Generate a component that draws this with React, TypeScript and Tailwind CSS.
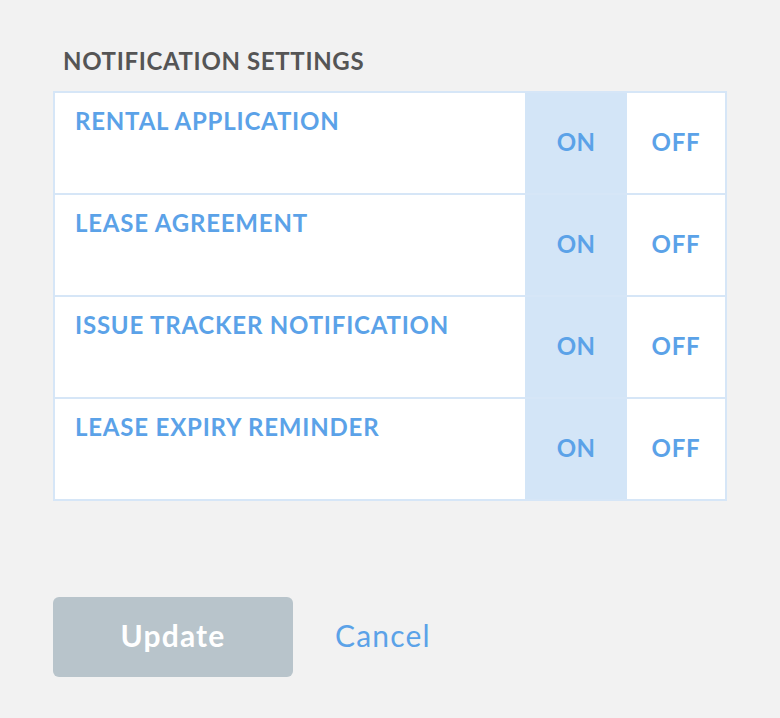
import { useState } from 'react';

const rows = ['RENTAL APPLICATION', 'LEASE AGREEMENT', 'ISSUE TRACKER NOTIFICATION', 'LEASE EXPIRY REMINDER'];

function SettingRow({ label, last }: { label: string; last: boolean }) {
    const [on, setOn] = useState(true);
    return (
        <div className={`flex ${last ? 'h-[100px]' : 'h-[102px] border-b-2 border-[#d6e6f7]'}`}>
            <div className="flex-1 pl-[20px] pt-[16px] text-[24px] tracking-[0.8px] font-bold text-[#5ba2e8] leading-none">{label}</div>
            <button
                onClick={() => setOn(true)}
                className={`w-[102px] pb-[2px] flex items-center justify-center text-[24px] tracking-[0.4px] font-bold text-[#5ba2e8] ${on ? 'bg-[#d3e5f7]' : 'bg-white'}`}
            >
                ON
            </button>
            <button
                onClick={() => setOn(false)}
                className={`w-[98px] pb-[2px] flex items-center justify-center text-[24px] tracking-[0.8px] font-bold text-[#5ba2e8] ${on ? 'bg-white' : 'bg-[#d3e5f7]'}`}
            >
                OFF
            </button>
        </div>
    );
}

function App() {
    return (
        <div className="min-h-[718px] w-[780px] bg-[#f2f2f2] pt-[49px] pl-[53px]" style={{ fontFamily: 'Lato, "Open Sans", sans-serif' }}>
            <h2 className="pl-[10px] text-[24px] tracking-[0.65px] font-bold text-[#555555] leading-none h-[42px]">NOTIFICATION SETTINGS</h2>
            <div className="w-[674px] border-2 border-[#d6e6f7] bg-white">
                {rows.map((r, i) => (
                    <SettingRow key={r} label={r} last={i === rows.length - 1} />
                ))}
            </div>
            <div className="flex items-center mt-[96px]">
                <button className="w-[240px] h-[80px] pb-[3px] rounded-[6px] bg-[#b8c4cb] text-white text-[30px] tracking-[1.2px] font-bold">Update</button>
                <button className="ml-[42px] pb-[3px] text-[30px] tracking-[1.2px] text-[#5ba2e8]">Cancel</button>
            </div>
        </div>
    );
}

export default App;
